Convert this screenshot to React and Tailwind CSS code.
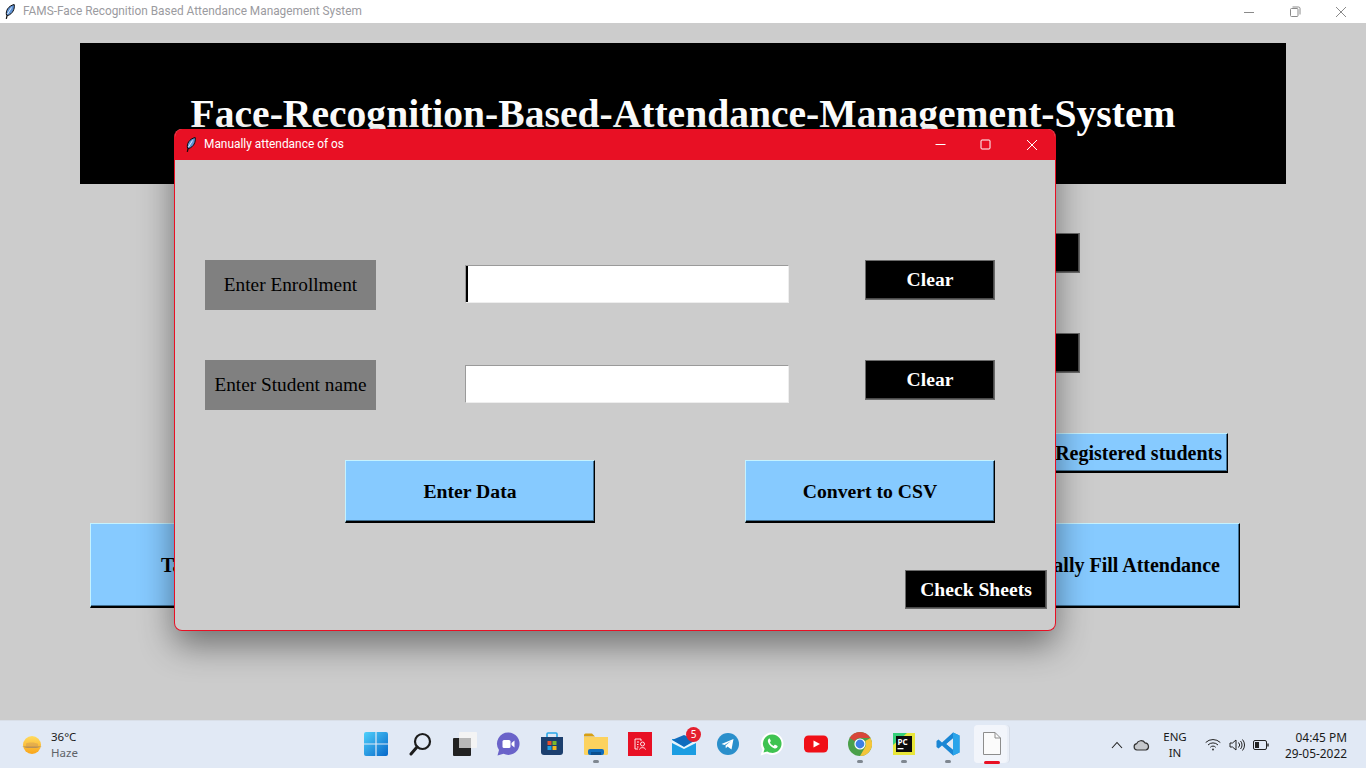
import React from 'react';

const serif = '[font-family:"Liberation_Serif",serif]';

const Feather = ({ className }) => (
  <svg className={className} viewBox="0 0 10 15" fill="none">
    <path d="M1.5 11 C0.5 7 3 2 9.2 0.5 C10 5 7.5 10 2.8 11.5 Z" fill="#5f93d6" stroke="#0b0b0b" strokeWidth="1" />
    <path d="M6.5 3.5 L2.5 10" stroke="#dff0ff" strokeWidth="1" />
    <path d="M2.2 11 L1.3 14.8" stroke="#0b0b0b" strokeWidth="1.2" />
  </svg>
);

const BlueButton = ({ className = '', children }) => (
  <div className={`flex items-center bg-[#86caff] border-t border-l border-t-[#c4f2ff] border-l-[#c4f2ff] border-b-2 border-r border-b-black border-r-black shadow-[inset_0_-1px_0_#3f6f92,inset_-1px_0_0_#3f6f92] font-bold text-black ${serif} ${className}`}>
    {children}
  </div>
);

const BlackButton = ({ className = '', children }) => (
  <div className={`flex items-center justify-center bg-black border border-[#6a6a6a] shadow-[inset_-1px_-1px_0_#4a4a4a] font-bold text-[19.6px] text-white ${serif} ${className}`}>
    {children}
  </div>
);

const FieldRow = ({ label, caret }) => (
  <div className="flex items-start h-[50px]">
    <div className={`w-[171px] h-[50px] flex items-center justify-center bg-[#808080] text-[19.3px] text-black ${serif}`}>{label}</div>
    <input
      readOnly
      aria-label={label}
      className={`ml-[89px] mt-[5px] w-[324px] h-[38px] bg-white border border-t-[#9a9a9a] border-l-[#9a9a9a] border-b-[#eeeeee] border-r-[#eeeeee] outline-none ${caret ? 'shadow-[inset_2px_0_0_#000]' : ''}`}
    />
    <BlackButton className="ml-[76px] w-[130px] h-[40px]">Clear</BlackButton>
  </div>
);

// taskbar icons
const TaskIcon = ({ dot, children }) => (
  <div className="relative w-[44px] h-[48px] flex items-center justify-center">
    {children}
    {dot && <span className="absolute left-[18.5px] top-[40px] w-[6px] h-[3px] rounded-full bg-[#7f8790]" />}
  </div>
);

const WinLogo = () => (
  <svg width="24" height="24" viewBox="0 0 24 24">
    <defs>
      <linearGradient id="win" x1="0" y1="0" x2="1" y2="1">
        <stop offset="0%" stopColor="#4fd0fb" />
        <stop offset="100%" stopColor="#0667c9" />
      </linearGradient>
    </defs>
    <path d="M0 2 a2 2 0 0 1 2-2 h9.4 v11.4 H0 Z M12.6 0 H22 a2 2 0 0 1 2 2 v9.4 H12.6 Z M0 12.6 h11.4 V24 H2 a2 2 0 0 1-2-2 Z M12.6 12.6 H24 V22 a2 2 0 0 1-2 2 h-9.4 Z" fill="url(#win)" />
  </svg>
);

const SearchIcon = () => (
  <svg width="24" height="24" viewBox="0 0 24 24" fill="none" stroke="#1c1c1c" className="ml-[1px]">
    <circle cx="13.5" cy="9.5" r="7.5" strokeWidth="2.2" />
    <path d="M8 15 L2 22" strokeWidth="3" strokeLinecap="round" />
  </svg>
);

const TaskView = () => (
  <svg width="24" height="24" viewBox="0 0 24 24" className="ml-[2px]">
    <rect x="6" y="0" width="18" height="16" rx="1" fill="#f4f4f4" />
    <rect x="0" y="6" width="18" height="18" rx="1" fill="#222222" />
    <rect x="6" y="6" width="12" height="10" fill="#b8b8b8" />
  </svg>
);

const ChatIcon = () => (
  <svg width="24" height="24" viewBox="0 0 24 24" className="-ml-[1px]">
    <path d="M12.5 0.5 a11.2 11.2 0 1 1 -5 21.3 L1.5 23.5 L3 18 A11.2 11.2 0 0 1 12.5 0.5 Z" fill="#6a63c9" />
    <rect x="6.5" y="8" width="8" height="8" rx="1.5" fill="#fff" />
    <path d="M15.5 11 L18.5 8.5 V15.5 L15.5 13 Z" fill="#fff" />
  </svg>
);

const StoreIcon = () => (
  <svg width="24" height="24" viewBox="0 0 24 24" fill="none">
    <path d="M7 5 V2 a1 1 0 0 1 1-1 h8 a1 1 0 0 1 1 1 V5" stroke="#2aa6e8" strokeWidth="1.6" />
    <path d="M1 5 H23 V20 a3 3 0 0 1 -3 3 H4 a3 3 0 0 1 -3-3 Z" fill="#1c3f6e" />
    <rect x="7.5" y="9" width="4" height="4" fill="#e8502c" />
    <rect x="12.5" y="9" width="4" height="4" fill="#7cb82b" />
    <rect x="7.5" y="14" width="4" height="4" fill="#1ea1e6" />
    <rect x="12.5" y="14" width="4" height="4" fill="#f5b81e" />
  </svg>
);

const FolderIcon = () => (
  <svg width="24" height="22" viewBox="0 0 24 22">
    <path d="M0 2 a1.5 1.5 0 0 1 1.5-1.5 H8 L11 3.5 H0 Z" fill="#d79f12" />
    <path d="M0 4 H24 V20.5 a1.5 1.5 0 0 1 -1.5 1.5 H1.5 A1.5 1.5 0 0 1 0 20.5 Z" fill="#fcd25e" />
    <rect x="4" y="16" width="16" height="6" rx="2" fill="#0f6cbd" />
    <rect x="7" y="19" width="10" height="3" fill="#0a4f8f" />
  </svg>
);

const RedApp = () => (
  <svg width="24" height="24" viewBox="0 0 24 24" fill="none" stroke="#fff" strokeWidth="0.9">
    <rect width="24" height="24" fill="#e81024" stroke="none" />
    <path d="M7 7 H13 V9 M7 7 V17 H10 M9 10 H11 M9 12.5 H10.5 M9 15 H10.5" />
    <circle cx="14.5" cy="12" r="2" />
    <path d="M11.5 17.5 C12 15 17 15 17.5 17.5" />
  </svg>
);

const MailIcon = () => (
  <div className="relative">
    <svg width="24" height="20" viewBox="0 0 24 20" className="mt-[2px]">
      <rect y="4" width="24" height="16" fill="#1b9de2" />
      <path d="M0 5 L12 0 L24 5 L12 12 Z" fill="#0f6cbd" />
      <path d="M0 5 L12 12 L24 5 V8 L12 14 L0 8 Z" fill="#fff" opacity="0.9" />
    </svg>
    <span className="absolute -top-[6px] -right-[5px] w-[15px] h-[15px] rounded-full bg-[#e4202e] text-white text-[10px] leading-[15px] text-center font-['Noto_Sans',sans-serif]">5</span>
  </div>
);

const TelegramIcon = () => (
  <svg width="22" height="22" viewBox="0 0 22 22">
    <circle cx="11" cy="11" r="11" fill="#2a8fcb" />
    <path d="M4.5 11 L16.5 6 L14.5 16.5 L10.5 13.5 L8.8 15.2 L8.5 12.5 L14 8 L7.5 12 Z" fill="#fff" />
  </svg>
);

const WhatsappIcon = () => (
  <svg width="24" height="24" viewBox="0 0 24 24">
    <path d="M12.3 0.5 A11.2 11.2 0 1 1 6.8 21.5 L0.5 23.5 L2.5 17.5 A11.2 11.2 0 0 1 12.3 0.5 Z" fill="#fff" />
    <path d="M12.3 2.5 A9.2 9.2 0 1 1 7.3 19.4 L3.5 20.5 L4.6 16.9 A9.2 9.2 0 0 1 12.3 2.5 Z" fill="#3fc351" />
    <path d="M8.8 6.8 C8 7.5 7.4 8.8 8.3 10.8 C9.4 13.2 11.4 15.2 14 16.2 C15.8 16.9 17 16 17.5 15 C17.8 14.3 17.6 13.9 17.2 13.7 L15.3 12.8 C14.9 12.6 14.6 12.8 14.4 13.1 L13.7 14 C11.9 13.3 10.6 12 9.9 10.3 L10.6 9.5 C10.9 9.2 10.9 8.9 10.7 8.5 L9.9 6.9 C9.6 6.4 9.2 6.4 8.8 6.8 Z" fill="#fff" />
  </svg>
);

const YoutubeIcon = () => (
  <svg width="24" height="18" viewBox="0 0 24 18">
    <rect width="24" height="17" y="0.5" rx="4.5" fill="#f00f17" />
    <path d="M9.5 5.5 L16 9 L9.5 12.5 Z" fill="#fff" />
  </svg>
);

const ChromeIcon = () => (
  <svg width="24" height="24" viewBox="0 0 24 24">
    <circle cx="12" cy="12" r="12" fill="#4aa04a" />
    <path d="M12 0 A12 12 0 0 1 22.4 6 H12 A6 6 0 0 0 6.8 9 L1.6 6 A12 12 0 0 1 12 0 Z" fill="#d8463a" />
    <path d="M22.4 6 A12 12 0 0 1 12 24 L17.2 15 A6 6 0 0 0 17.2 9 Z" fill="#f4c53a" />
    <circle cx="12" cy="12" r="5.6" fill="#fff" />
    <circle cx="12" cy="12" r="4.4" fill="#3f7fe4" />
  </svg>
);

const PycharmIcon = () => (
  <svg width="22" height="22" viewBox="0 0 22 22">
    <rect width="22" height="22" fill="#e8e63a" />
    <path d="M0 0 H14 L0 12 Z" fill="#36d07a" />
    <rect x="3" y="3" width="16" height="16" fill="#0b0b0b" />
    <text x="4.5" y="11.5" fill="#fff" fontSize="8" fontWeight="700" fontFamily="Noto Sans, sans-serif">PC</text>
    <rect x="4.5" y="15" width="6" height="1.3" fill="#fff" />
  </svg>
);

const VscodeIcon = () => (
  <svg width="24" height="24" viewBox="0 0 24 24">
    <path d="M17 0.5 L23.5 3.5 V20.5 L17 23.5 L6 13.5 L2.5 16.5 L0.5 15 V9 L2.5 7.5 L6 10.5 Z M17 6.5 L10.5 12 L17 17.5 Z" fill="#1a86d4" />
    <path d="M17 0.5 L23.5 3.5 V20.5 L17 23.5 Z" fill="#2aa4ea" />
    <path d="M17 6.5 V17.5 L10.5 12 Z" fill="#e1e9f5" />
  </svg>
);

const FileIcon = () => (
  <svg width="18" height="23" viewBox="0 0 18 23" fill="#fbfbfb" stroke="#8d8d8d">
    <path d="M0.5 0.5 H12 L17.5 6 V22.5 H0.5 Z" />
    <path d="M12 0.5 V6 H17.5" fill="none" />
  </svg>
);

const SunIcon = () => (
  <svg width="20" height="20" viewBox="0 0 20 20">
    <defs>
      <linearGradient id="sun" x1="0" y1="0" x2="0" y2="1">
        <stop offset="0%" stopColor="#ffdb5e" />
        <stop offset="100%" stopColor="#f9a51a" />
      </linearGradient>
    </defs>
    <circle cx="10" cy="10" r="9" fill="url(#sun)" />
    <path d="M0 11.5 H20 L14 13 H5 Z" fill="#8d7f63" opacity="0.75" />
    <path d="M4 8.5 C7 7 13 7 16 9 V13 H4 Z" fill="#c9975a" opacity="0.45" />
  </svg>
);

export default function App() {
  return (
    <div className="relative w-[1366px] h-[768px] overflow-hidden flex flex-col bg-[#cccccc] font-['Noto_Sans',sans-serif]">
      {/* main window titlebar */}
      <div className="h-[23px] bg-white flex items-center shrink-0">
        <Feather className="w-[10px] h-[15px] ml-[5px]" />
        <span className="ml-[8px] text-[11.85px] text-[#9b9ba0] font-['Roboto',sans-serif]">FAMS-Face Recognition Based Attendance Management System</span>
        <div className="ml-auto flex items-center text-[#8a8a8a]">
          <svg width="12" height="12" viewBox="0 0 12 12" className="mr-[34px]" stroke="currentColor" fill="none"><path d="M1 6.5 H11" /></svg>
          <svg width="12" height="12" viewBox="0 0 12 12" className="mr-[34px]" stroke="currentColor" fill="none"><rect x="1.5" y="2.5" width="7.5" height="8" rx="1" /><path d="M3.5 1 H9.5 a1.5 1.5 0 0 1 1.5 1.5 V8.5" /></svg>
          <svg width="12" height="12" viewBox="0 0 12 12" className="mr-[19px]" stroke="currentColor" fill="none"><path d="M1 1 L11 11 M11 1 L1 11" /></svg>
        </div>
      </div>

      {/* main window body */}
      <div className="flex-1 flex flex-col pt-[20px]">
        <div className={`mx-[80px] h-[141px] bg-black flex items-center justify-center pt-[2px] text-white font-bold text-[39.6px] ${serif}`}>
          Face-Recognition-Based-Attendance-Management-System
        </div>
        <div className="mt-[49px] ml-[950px]">
          <BlackButton className="w-[130px] h-[40px]">Clear</BlackButton>
        </div>
        <div className="mt-[60px] ml-[950px]">
          <BlackButton className="w-[130px] h-[40px]">Clear</BlackButton>
        </div>
        <div className="mt-[60px] ml-[878px]">
          <BlueButton className="w-[350px] h-[40px] justify-end pr-[5px] text-[20px]">View Registered students</BlueButton>
        </div>
        <div className="mt-[50px] mr-[126px] ml-[90px] flex justify-between">
          <BlueButton className="w-[350px] h-[85px] pl-[70px] text-[20px]">Take Attendance</BlueButton>
          <BlueButton className="w-[350px] h-[85px] justify-end pr-[19px] text-[20px]">Manually Fill Attendance</BlueButton>
        </div>
      </div>

      {/* taskbar */}
      <div className="h-[48px] shrink-0 bg-[#e1e9f5] flex items-stretch border-t border-t-[#d9dfe8]">
        <div className="w-[354px] flex items-center">
          <div className="ml-[22px]"><SunIcon /></div>
          <div className="ml-[9px] text-[11.5px] leading-[16px] pt-[1px]">
            <div className="text-[#1a1a1a]">36°C</div>
            <div className="text-[#5f6368]">Haze</div>
          </div>
        </div>
        <div className="flex relative -mt-[1px]">
          <TaskIcon><WinLogo /></TaskIcon>
          <TaskIcon><SearchIcon /></TaskIcon>
          <TaskIcon><TaskView /></TaskIcon>
          <TaskIcon><ChatIcon /></TaskIcon>
          <TaskIcon><StoreIcon /></TaskIcon>
          <TaskIcon dot><FolderIcon /></TaskIcon>
          <TaskIcon><RedApp /></TaskIcon>
          <TaskIcon><MailIcon /></TaskIcon>
          <TaskIcon><TelegramIcon /></TaskIcon>
          <TaskIcon><WhatsappIcon /></TaskIcon>
          <TaskIcon><YoutubeIcon /></TaskIcon>
          <TaskIcon dot><ChromeIcon /></TaskIcon>
          <TaskIcon dot><PycharmIcon /></TaskIcon>
          <TaskIcon dot><VscodeIcon /></TaskIcon>
          <div className="relative w-[44px] h-[48px] flex items-center justify-center">
            <span className="absolute left-[4px] top-[5px] w-[36px] h-[38px] rounded-[4px] bg-[#eaeff8] border-r border-r-[#d5dbe6]" />
            <span className="absolute left-[4px] top-[5px] w-[33px] h-[38px] rounded-[4px] bg-[#f2f5fb]" />
            <span className="relative -mt-[2px]"><FileIcon /></span>
            <span className="absolute left-[14px] top-[41px] w-[16px] h-[3px] rounded-full bg-[#e81024]" />
          </div>
        </div>
        <div className="flex-1 flex items-center relative text-[#1a1a1a]">
          <svg width="12" height="8" viewBox="0 0 12 8" fill="none" stroke="#222" strokeWidth="1.1" className="ml-[97px]"><path d="M1 7 L6 1.5 L11 7" /></svg>
          <svg width="17" height="12" viewBox="0 0 17 12" className="ml-[10px]" fill="#c5c8cc" stroke="#333" strokeWidth="1.2"><path d="M4 11 a3.2 3.2 0 0 1 -0.4-6.3 A4.8 4.8 0 0 1 12 3.8 a3.7 3.7 0 0 1 1 7.2 Z" /></svg>
          <div className="ml-[10px] w-[30px] text-center text-[11.5px] leading-[16px] pt-[1px]">
            <div>ENG</div>
            <div>IN</div>
          </div>
          <svg width="16" height="13" viewBox="0 0 16 13" fill="none" stroke="#222" className="ml-[15px]"><path d="M0.7 4.5 a10.5 10.5 0 0 1 14.6 0 M3 7 a7 7 0 0 1 10 0 M5.3 9.3 a3.6 3.6 0 0 1 5.4 0" /><circle cx="8" cy="11.5" r="0.9" fill="#222" stroke="none" /></svg>
          <svg width="17" height="14" viewBox="0 0 17 14" fill="none" stroke="#222" className="ml-[8px]"><path d="M1 5 H3.5 L7 2 V12 L3.5 9 H1 Z M9.5 4.5 a3.5 3.5 0 0 1 0 5 M11.5 3 a6 6 0 0 1 0 8 M13.5 1.5 a8.5 8.5 0 0 1 0 11" /></svg>
          <svg width="16" height="10" viewBox="0 0 16 10" fill="none" stroke="#222" className="ml-[7px]"><rect x="0.5" y="0.5" width="13" height="9" rx="1.5" /><rect x="2" y="2" width="4" height="6" fill="#222" stroke="none" /><path d="M15 3.5 V6.5" strokeWidth="1.4" /></svg>
          <div className="ml-auto mr-[19px] text-right text-[11.9px] leading-[16px] pt-[1px]">
            <div>04:45 PM</div>
            <div>29-05-2022</div>
          </div>
        </div>
      </div>

      {/* dialog window floating over the app */}
      <div className="absolute left-[174px] top-[129px] w-[882px] h-[502px] rounded-[8px] overflow-hidden bg-[#cccccc] border border-[#e81024] border-t-0 flex flex-col shadow-[0_14px_34px_rgba(0,0,0,0.45)]">
        <div className="h-[31px] shrink-0 bg-[#e81024] flex items-center text-white">
          <Feather className="w-[10px] h-[15px] ml-[11px]" />
          <span className="ml-[8px] text-[11.9px] font-['Roboto',sans-serif]">Manually attendance of os</span>
          <div className="ml-auto flex items-center">
            <svg width="11" height="11" viewBox="0 0 11 11" className="mr-[34px]" stroke="#fff" fill="none"><path d="M0.5 5.5 H10.5" /></svg>
            <svg width="11" height="11" viewBox="0 0 11 11" className="mr-[35px]" stroke="#fff" fill="none"><rect x="1" y="1" width="9" height="9" rx="1" /></svg>
            <svg width="12" height="12" viewBox="0 0 12 12" className="mr-[17px]" stroke="#fff" fill="none"><path d="M1 1 L11 11 M11 1 L1 11" /></svg>
          </div>
        </div>
        <div className="flex-1 flex flex-col pl-[30px] pt-[100px]">
          <FieldRow label="Enter Enrollment" caret />
          <div className="mt-[50px]"><FieldRow label="Enter Student name" /></div>
          <div className="mt-[50px] ml-[140px] flex gap-[150px]">
            <BlueButton className="w-[250px] h-[63px] justify-center pt-[2px] text-[19.7px]">Enter Data</BlueButton>
            <BlueButton className="w-[250px] h-[63px] justify-center pt-[2px] text-[19.7px]">Convert to CSV</BlueButton>
          </div>
          <div className="mt-[47px] ml-[700px]">
            <BlackButton className="w-[142px] h-[39px]">Check Sheets</BlackButton>
          </div>
        </div>
      </div>
    </div>
  );
}
